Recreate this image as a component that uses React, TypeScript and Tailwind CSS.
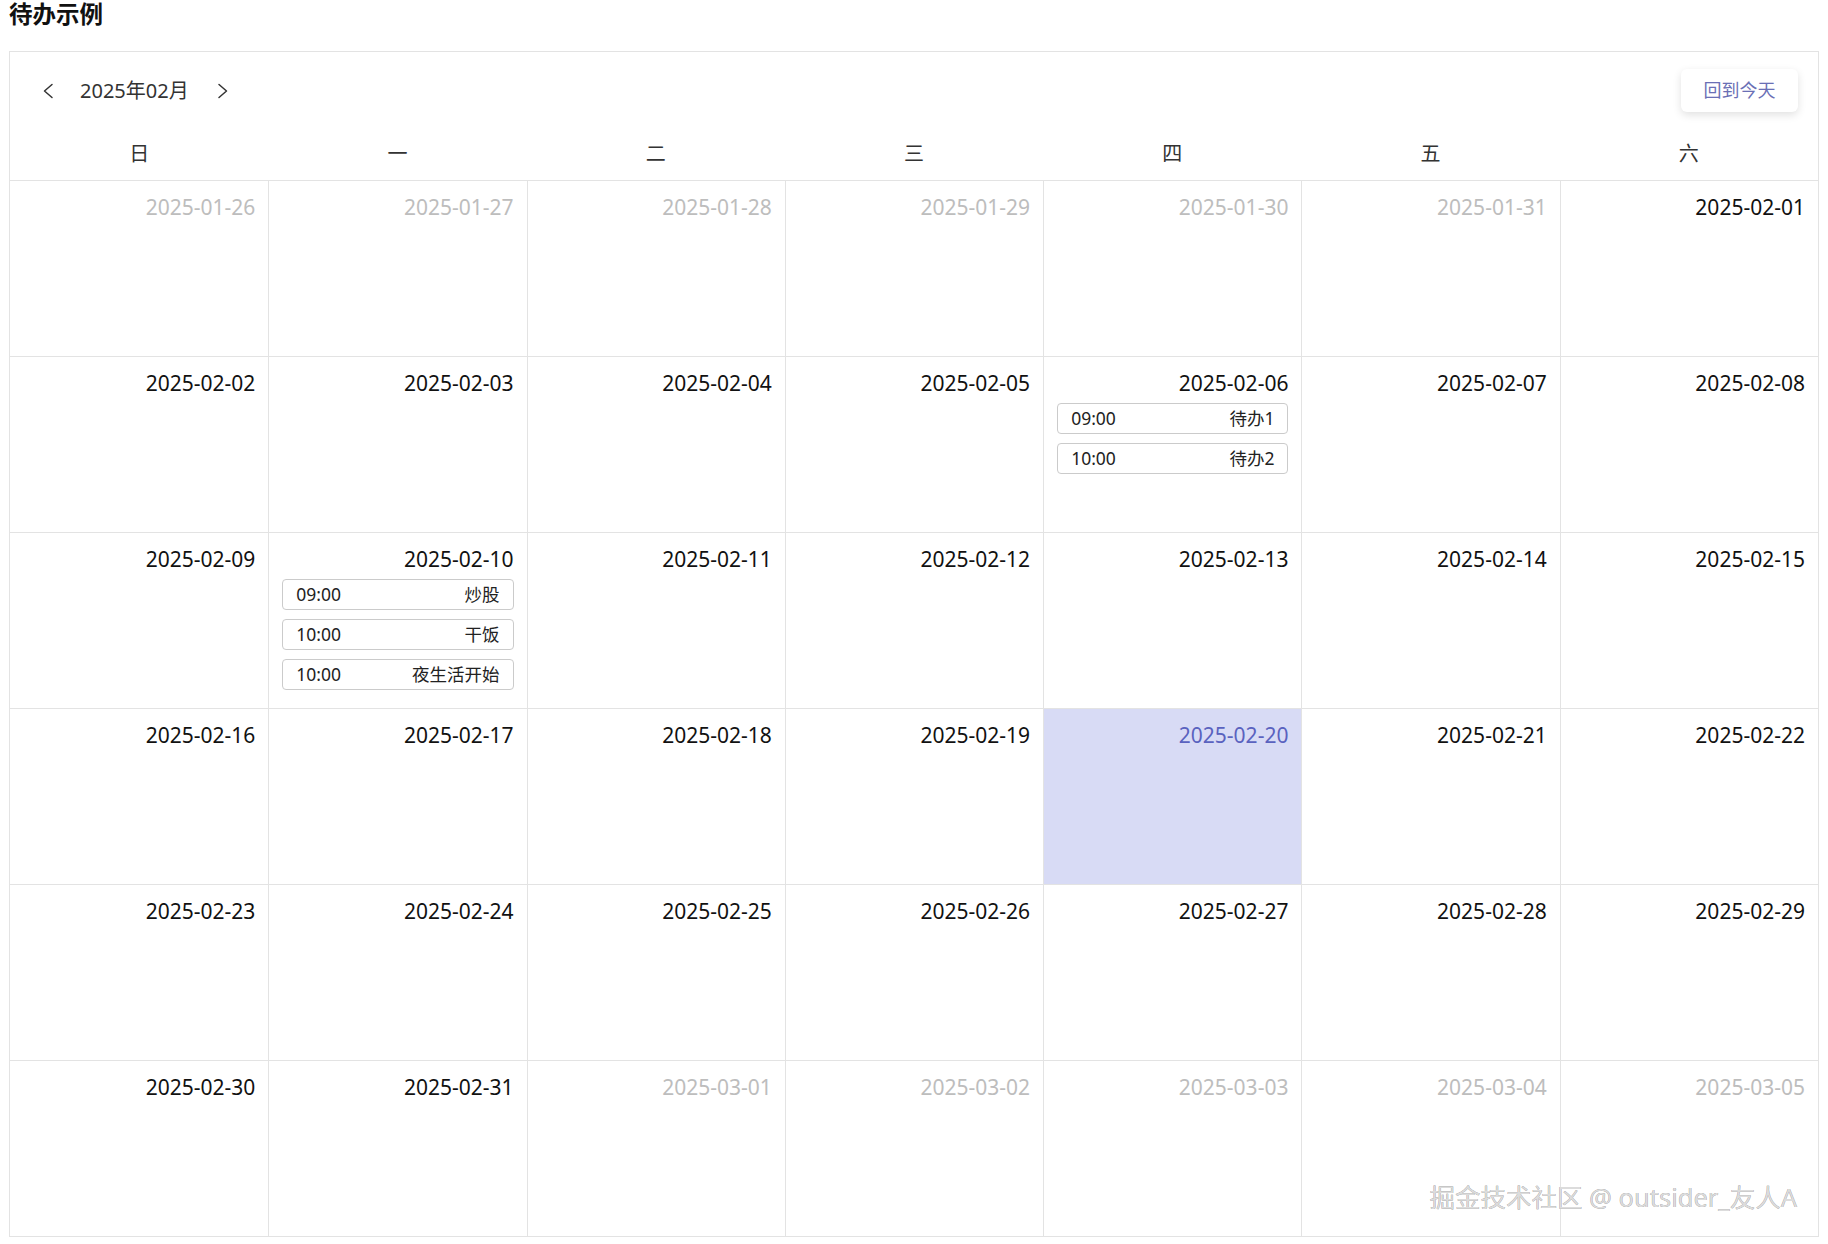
import React from 'react'

type Todo = { time: string; title: string }

const WEEK = ['日', '一', '二', '三', '四', '五', '六']

const TODOS: Record<string, Todo[]> = {
  '2025-02-06': [
    { time: '09:00', title: '待办1' },
    { time: '10:00', title: '待办2' },
  ],
  '2025-02-10': [
    { time: '09:00', title: '炒股' },
    { time: '10:00', title: '干饭' },
    { time: '10:00', title: '夜生活开始' },
  ],
}

const TODAY = '2025-02-20'

const pad = (n: number) => String(n).padStart(2, '0')

// 6 行 × 7 列，和原组件一样，二月按 31 天排
const days: { date: string; current: boolean }[] = [
  ...[26, 27, 28, 29, 30, 31].map((d) => ({ date: `2025-01-${d}`, current: false })),
  ...Array.from({ length: 31 }, (_, i) => ({ date: `2025-02-${pad(i + 1)}`, current: true })),
  ...[1, 2, 3, 4, 5].map((d) => ({ date: `2025-03-${pad(d)}`, current: false })),
]

function Chevron({ dir }: { dir: 'left' | 'right' }) {
  return (
    <svg width="12" height="16" viewBox="0 0 12 16" fill="none" stroke="#333" strokeWidth="1.5" strokeLinecap="round" strokeLinejoin="round">
      {dir === 'left' ? <polyline points="10,1.5 2.5,8 10,14.5" /> : <polyline points="2,1.5 9.5,8 2,14.5" />}
    </svg>
  )
}

function DayCell({ date, current, col }: { date: string; current: boolean; col: number }) {
  const isToday = date === TODAY
  const todos = TODOS[date] ?? []
  return (
    <div
      className={`h-[176px] border-t border-[#e3e3e3] px-[13px] pt-[12px] ${col > 0 ? 'border-l' : ''} ${
        isToday ? 'bg-[#d8dbf5]' : 'bg-white'
      }`}
    >
      <div
        className={`text-right text-[21px] leading-[28px] ${
          isToday ? 'text-[#5a62bf]' : current ? 'text-[#111]' : 'text-[#bdbdbd]'
        }`}
      >
        {date}
      </div>
      {todos.length > 0 && (
        <div className="mt-[6px] flex flex-col gap-[9px]">
          {todos.map((t, i) => (
            <div
              key={i}
              className="h-[31px] flex items-center justify-between rounded-[4px] border border-[#cbcbcb] bg-white px-[13px] text-[17.5px] text-[#222]"
            >
              <span>{t.time}</span>
              <span>{t.title}</span>
            </div>
          ))}
        </div>
      )}
    </div>
  )
}

export default function App() {
  return (
    <div className="min-h-screen bg-white px-[9px] font-['Noto_Sans','Noto_Sans_CJK_SC',sans-serif]">
      <h1 className="text-[23.5px] font-bold leading-[28px] text-[#111]">待办示例</h1>

      <div className="relative mt-[23px] border border-[#e3e3e3]">
        {/* ── 头部 ── */}
        <div className="pt-[17px]">
          <div className="flex h-[43px] items-center justify-between pl-[32px] pr-[20px]">
            <div className="flex items-center">
              <button className="flex items-center">
                <Chevron dir="left" />
              </button>
              <span className="ml-[26px] text-[20px] text-[#333]">2025年02月</span>
              <button className="ml-[28px] flex items-center">
                <Chevron dir="right" />
              </button>
            </div>
            <button className="h-[43px] w-[117px] rounded-[6px] bg-white text-[18px] text-[#6a6fb5] shadow-[0_3px_8px_rgba(0,0,0,0.12)]">
              回到今天
            </button>
          </div>
          <div className="mt-[28px] grid grid-cols-7 pb-[12px]">
            {WEEK.map((w) => (
              <div key={w} className="text-center text-[20px] leading-[28px] text-[#333]">
                {w}
              </div>
            ))}
          </div>
        </div>

        {/* ── 日期格子 ── */}
        <div className="grid grid-cols-7">
          {days.map((d, i) => (
            <DayCell key={d.date} date={d.date} current={d.current} col={i % 7} />
          ))}
        </div>

        <div className="pointer-events-none absolute bottom-[26px] right-[21px] text-[25.5px] font-normal leading-none text-[#dcdcdc] [text-shadow:0_0_0.5px_#666]">
          掘金技术社区 @ outsider_友人A
        </div>
      </div>
    </div>
  )
}
